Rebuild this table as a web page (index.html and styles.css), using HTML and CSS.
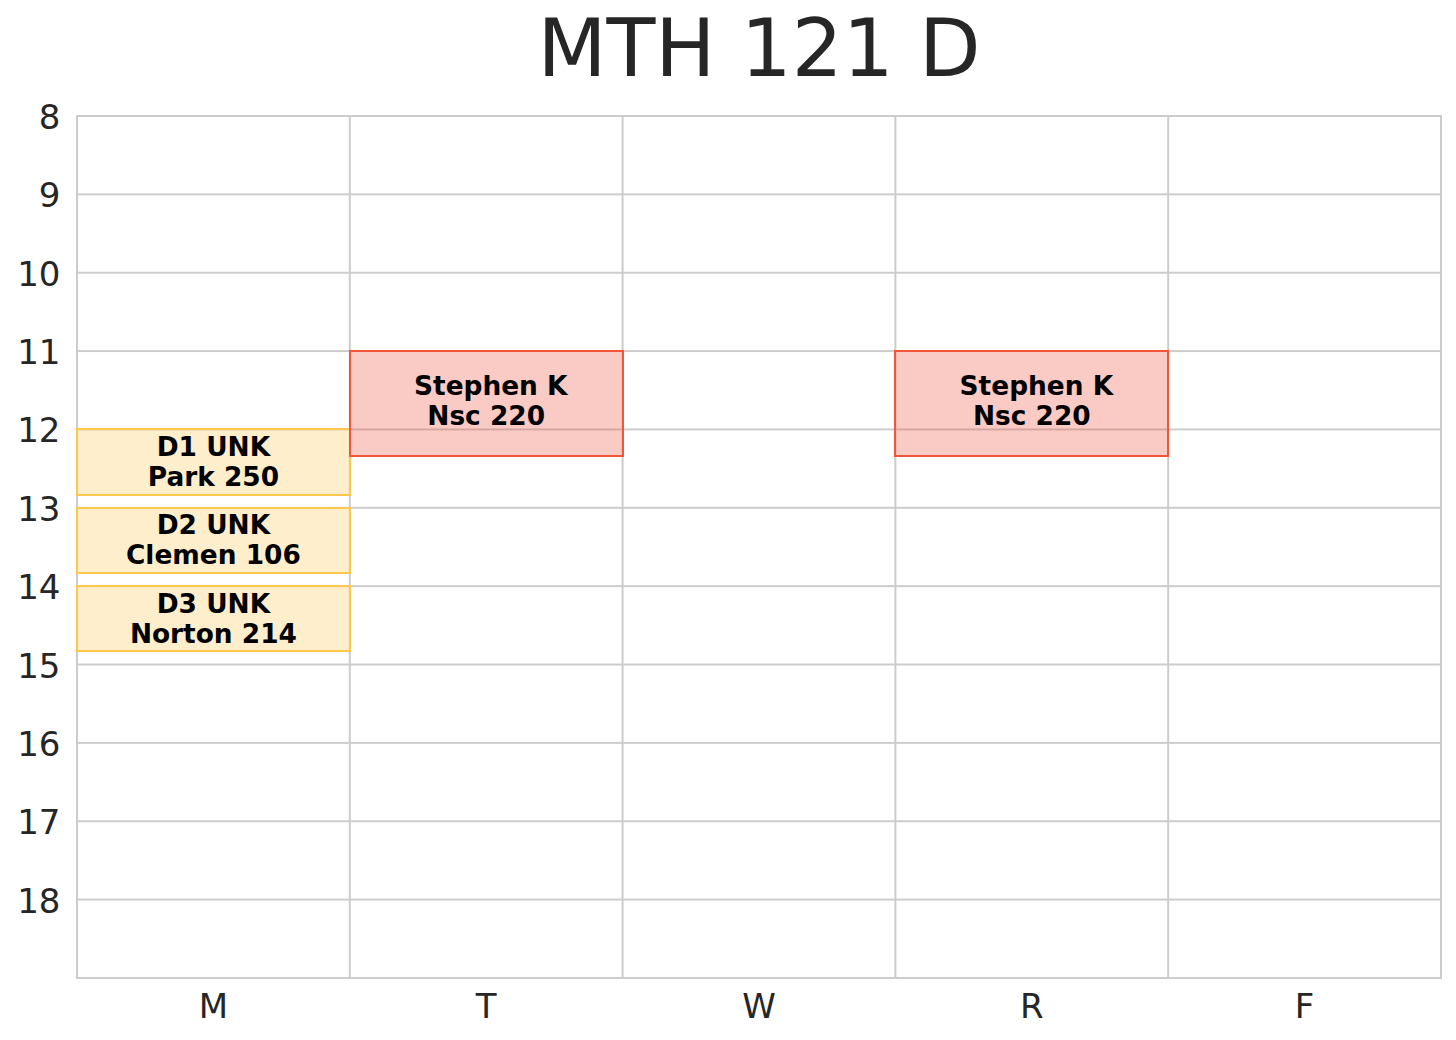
FILE: index.html
```html
<!DOCTYPE html>
<html lang="en">
<head>
<meta charset="utf-8">
<title>MTH 121 D</title>
<link rel="stylesheet" href="styles.css">
</head>
<body>
<div class="page">
  <h1 class="title">MTH 121 D</h1>
  <div class="chart">
    <div class="yaxis">
      <div class="ytick">8</div>
      <div class="ytick">9</div>
      <div class="ytick">10</div>
      <div class="ytick">11</div>
      <div class="ytick">12</div>
      <div class="ytick">13</div>
      <div class="ytick">14</div>
      <div class="ytick">15</div>
      <div class="ytick">16</div>
      <div class="ytick">17</div>
      <div class="ytick">18</div>
    </div>
    <div class="plot">
      <div class="event lab d1"><span>D1 UNK</span><span>Park 250</span></div>
      <div class="event lab d2"><span>D2 UNK</span><span>Clemen 106</span></div>
      <div class="event lab d3"><span>D3 UNK</span><span>Norton 214</span></div>
      <div class="event lec tue"><span> Stephen K</span><span>Nsc 220</span></div>
      <div class="event lec thu"><span> Stephen K</span><span>Nsc 220</span></div>
    </div>
  </div>
  <div class="xaxis">
    <div class="xtick">M</div>
    <div class="xtick">T</div>
    <div class="xtick">W</div>
    <div class="xtick">R</div>
    <div class="xtick">F</div>
  </div>
</div>
</body>
</html>
```
FILE: styles.css
```css
* { box-sizing: border-box; }
html, body { margin: 0; padding: 0; background: #ffffff; }
body {
  font-family: "DejaVu Sans", "Liberation Sans", sans-serif;
  color: #262626;
}
.page {
  width: 1456px;
  height: 1040px;
  overflow: hidden;
}
.title {
  margin: 0 0 0 76px;
  width: 1366px;
  height: 115px;
  padding-top: 9px;
  font-size: 80px;
  line-height: 80px;
  font-weight: normal;
  text-align: center;
  color: #262626;
}
.chart {
  display: flex;
  height: 864px;
}
.yaxis {
  width: 76px;
  display: flex;
  flex-direction: column;
}
.ytick {
  flex: 0 0 78.36px;
  height: 78.36px;
  line-height: 78.36px;
  font-size: 34px;
  text-align: right;
  padding-right: 15.5px;
}
.ytick:first-child { margin-top: -37px; }
.plot {
  width: 1366px;
  height: 864px;
  padding: 0 2px 2px 0;
  display: grid;
  grid-template-columns: repeat(5, 1fr);
  grid-template-rows: repeat(66, 1fr);
  background-image:
    linear-gradient(to right, #cccccc 2px, transparent 2px),
    linear-gradient(to bottom, #cccccc 2px, transparent 2px);
  background-size: 272.8px 100%, 100% 78.36px;
  background-repeat: repeat;
}
.event {
  margin: 0 -2px -2px 0;
  border: 2px solid;
  display: flex;
  flex-direction: column;
  align-items: center;
  justify-content: center;
  font-size: 26.4px;
  line-height: 30px;
  font-weight: bold;
  color: #000000;
  white-space: pre;
}
.lab {
  grid-column: 1;
  background: rgba(255, 195, 70, 0.28);
  border-color: #fdc84f;
}
.lec {
  background: rgba(240, 80, 60, 0.3);
  border-color: #f2553a;
  grid-row: 19 / span 8;
  padding-bottom: 4px;
}
.d1 { grid-row: 25 / span 5; }
.d2 { grid-row: 31 / span 5; }
.d3 { grid-row: 37 / span 5; }
.tue { grid-column: 2; }
.thu { grid-column: 4; }
.xaxis {
  display: flex;
  margin-left: 77px;
  padding-top: 7px;
}
.xtick {
  width: 272.8px;
  font-size: 34px;
  line-height: 40px;
  text-align: center;
}
```
